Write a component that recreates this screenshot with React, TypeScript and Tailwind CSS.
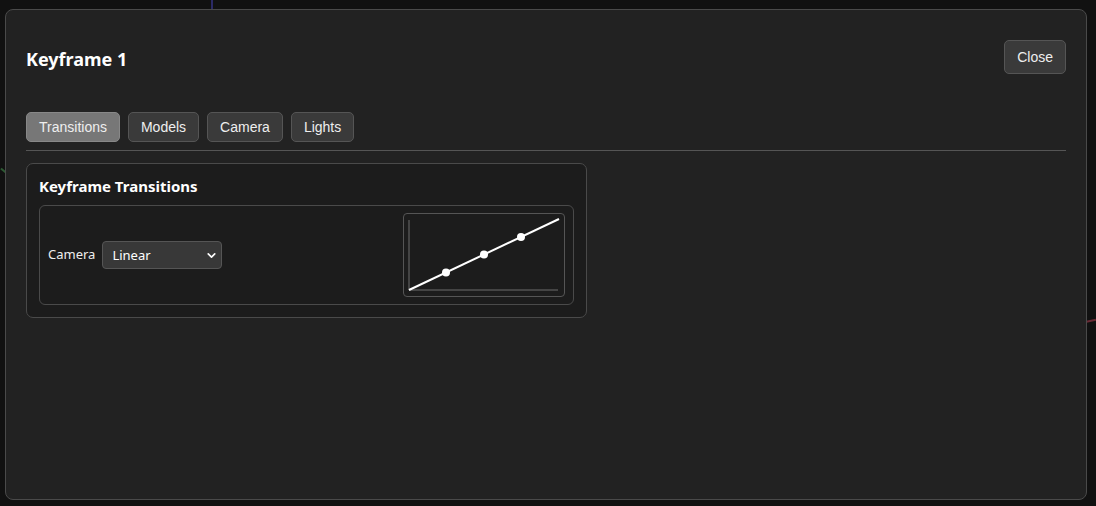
import { ChevronDown } from "lucide-react";

const tabs = ["Transitions", "Models", "Camera", "Lights"];

function CurvePreview() {
  return (
    <div className="w-[162px] h-[84px] rounded-[4px] border border-[#555] bg-[#1c1c1c]">
      <svg width="160" height="82" viewBox="0 0 160 82" className="block">
        {/* axes */}
        <line x1="5" y1="6" x2="5" y2="76" stroke="#444" strokeWidth="2" />
        <line x1="5" y1="76" x2="154" y2="76" stroke="#444" strokeWidth="2" />
        {/* linear curve */}
        <line x1="5" y1="76" x2="155" y2="5" stroke="#fff" strokeWidth="2" />
        <circle cx="42" cy="58.5" r="4" fill="#fff" />
        <circle cx="80" cy="40.5" r="4" fill="#fff" />
        <circle cx="117" cy="23" r="4" fill="#fff" />
      </svg>
    </div>
  );
}

export default function App() {
  return (
    <div className="relative h-[506px] w-full overflow-hidden bg-[#111] pl-[5px] pr-[9px] pt-[9px] pb-[6px]">
      {/* scene lines behind the dialog */}
      <div className="absolute left-[211px] top-0 h-[12px] w-[2px] bg-[#2b2a66]" />
      <div className="absolute left-0 top-[170px] h-[2px] w-[8px] rotate-[40deg] bg-[#2d5a33]" />
      <div className="absolute right-0 top-[320px] h-[2px] w-[12px] -rotate-[12deg] bg-[#6a2a35]" />

      <div className="relative flex h-full flex-col rounded-[8px] border border-[#4a4a4a] bg-[#222] px-5 pt-[30px]">
        {/* header */}
        <div className="flex items-start justify-between">
          <h2 className="mt-[6px] text-[18px] font-bold leading-[26px] text-white [font-family:'Noto_Sans',sans-serif]">
            Keyframe 1
          </h2>
          <button className="h-[34px] rounded-[5px] border border-[#555] bg-[#3a3a3a] px-3 text-[14px] text-[#eee] [font-family:'Liberation_Sans',Arial,sans-serif]">
            Close
          </button>
        </div>

        {/* tabs */}
        <div className="mt-[38px] flex gap-[8px] border-b border-[#555] pb-[8px]">
          {tabs.map((t, i) => (
            <button
              key={t}
              className={
                i === 0
                  ? "h-[30px] rounded-[5px] border border-[#888] bg-[#777] px-3 text-[14px] text-[#eee] [font-family:'Liberation_Sans',Arial,sans-serif]"
                  : "h-[30px] rounded-[5px] border border-[#555] bg-[#3a3a3a] px-3 text-[14px] text-[#eee] [font-family:'Liberation_Sans',Arial,sans-serif]"
              }
            >
              {t}
            </button>
          ))}
        </div>

        {/* transitions panel */}
        <div className="mt-[12px] w-[561px] rounded-[7px] border border-[#4a4a4a] bg-[#1c1c1c] px-3 pb-3 pt-[12px] [font-family:'Noto_Sans',sans-serif]">
          <h3 className="text-[15px] font-bold leading-[20px] text-white">Keyframe Transitions</h3>
          <div className="mt-[9px] flex items-center justify-between rounded-[6px] border border-[#4a4a4a] py-[7px] pl-2 pr-2">
            <div className="flex items-center gap-[7px]">
              <span className="text-[13px] text-[#eee]">Camera</span>
              <div className="relative">
                <select className="h-[28px] w-[120px] appearance-none rounded-[4px] border border-[#555] bg-[#383838] pl-[9px] pt-[1px] text-[13px] text-white outline-none">
                  <option>Linear</option>
                  <option>Ease In</option>
                  <option>Ease Out</option>
                  <option>Ease In Out</option>
                </select>
                <ChevronDown
                  size={13}
                  strokeWidth={3}
                  className="pointer-events-none absolute right-[4px] top-[8px] text-white"
                />
              </div>
            </div>
            <CurvePreview />
          </div>
        </div>
      </div>
    </div>
  );
}
